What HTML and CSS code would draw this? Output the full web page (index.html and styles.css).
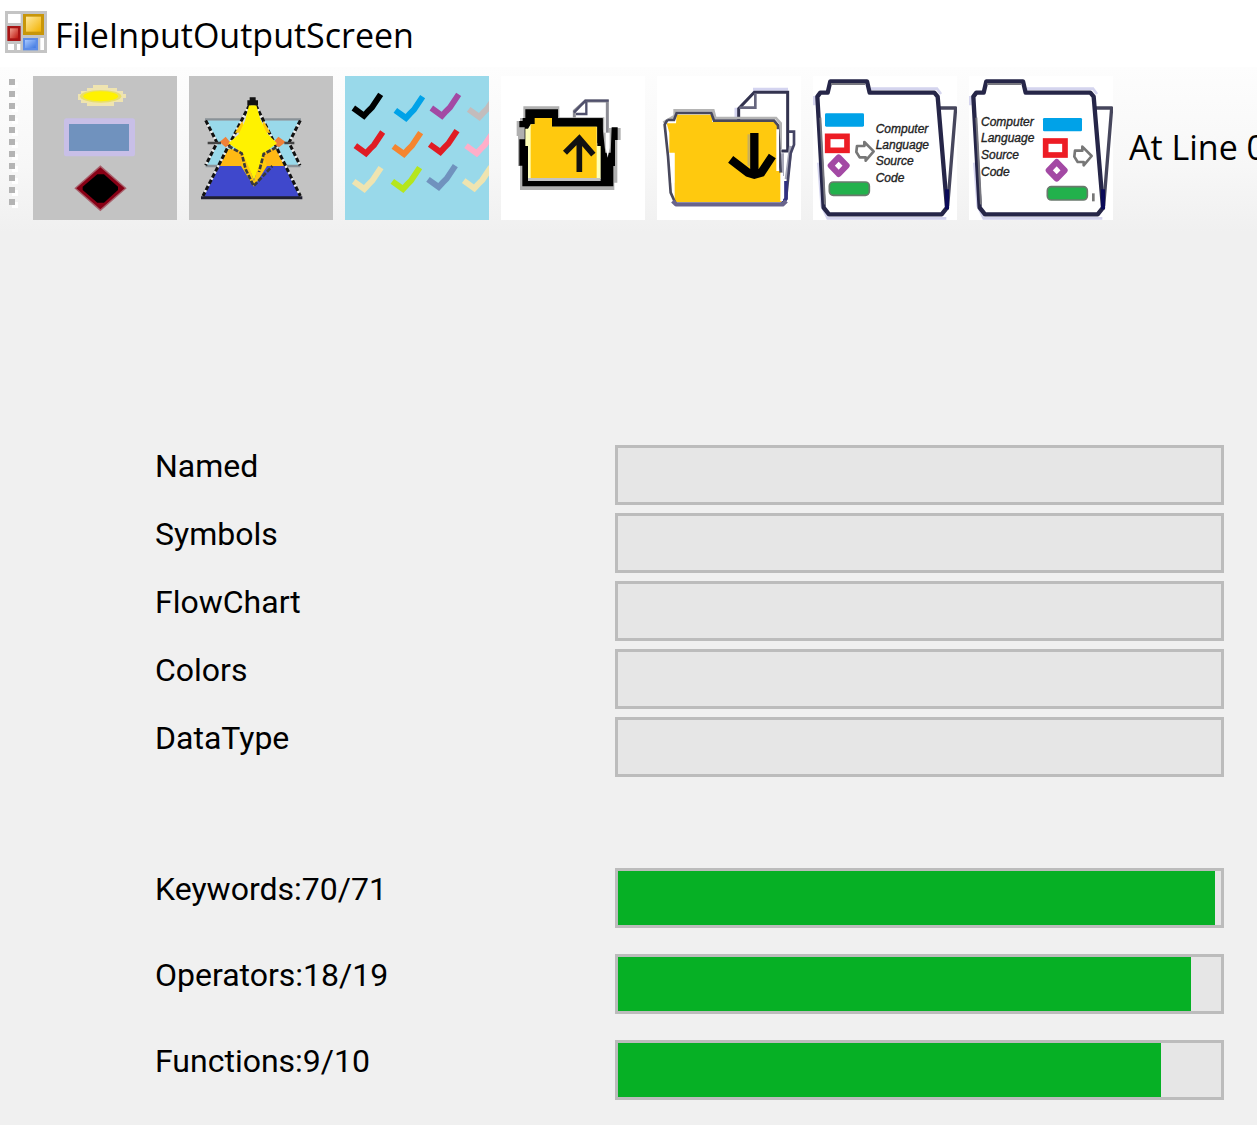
FILE: index.html
```html
<!DOCTYPE html>
<html lang="en">
<head>
<meta charset="utf-8">
<title>FileInputOutputScreen</title>
<link rel="stylesheet" href="styles.css">
</head>
<body>
<header class="titlebar">
  <svg class="app-icon" viewBox="15 33 126 126" aria-hidden="true">
    <defs>
      <linearGradient id="gold" x1="0" y1="0" x2="1" y2="1"><stop offset="0" stop-color="#ffe9a0"/><stop offset="1" stop-color="#f2b200"/></linearGradient>
      <linearGradient id="red" x1="0" y1="0" x2="1" y2="1"><stop offset="0" stop-color="#f0a090"/><stop offset="1" stop-color="#c01810"/></linearGradient>
      <linearGradient id="blue" x1="0" y1="0" x2="1" y2="1"><stop offset="0" stop-color="#a8c8ff"/><stop offset="1" stop-color="#3f78e0"/></linearGradient>
    </defs>
    <rect x="15" y="33" width="126" height="126" fill="#c4c4c4"/>
    <path fill="#fff" d="M24 42h38v27H24zM24 132h18v18H24zM51 132h10v18H51zM121 114h11v36h-11z"/>
    <rect x="69" y="42" width="63" height="63" fill="#c8960a"/>
    <rect x="78" y="50" width="45" height="45" fill="url(#gold)"/>
    <rect x="22" y="78" width="40" height="45" fill="#a81414"/>
    <rect x="30" y="85" width="24" height="30" fill="url(#red)"/>
    <rect x="69" y="114" width="45" height="37" fill="#5c8ce8"/>
    <rect x="75" y="120" width="32" height="24" fill="url(#blue)"/>
  </svg>
  <h1 class="title">FileInputOutputScreen</h1>
</header>

<div class="toolbar" role="toolbar" aria-label="File tools">
  <div class="grip" aria-hidden="true"></div>
  <button class="tool" type="button" aria-label="Flowchart shapes">
    <svg viewBox="99 30 432 432">
      <rect x="99" y="30" width="432" height="432" fill="#c3c3c3"/>
      <path fill="#efe4b0" d="M279 57h45v9h27v9h18v9h9v12h-9v12h-27v12h-81v-9h-18v-9h-9V84h9v-9h18v-9h18z"/>
      <ellipse cx="302" cy="91" rx="62" ry="19" fill="#e9df68"/>
      <ellipse cx="302" cy="91" rx="52" ry="15" fill="#fff200"/>
      <rect x="192" y="157" width="213" height="114" rx="8" fill="#c8bfe7"/>
      <rect x="207" y="174" width="180" height="81" fill="#7092be"/>
      <path fill="#a8606c" d="M301 298L380 367L301 436L223 367Z"/>
      <path fill="#880015" d="M301 304L374 367L301 430L229 367Z"/>
      <path fill="#000" d="M292 325H312L354 362V372L312 410H292L248 372V362Z"/>
    </svg>
  </button>
  <button class="tool" type="button" aria-label="Symbols">
    <svg viewBox="12 30 432 432">
      <rect x="12" y="30" width="432" height="432" fill="#c3c3c3"/>
      <path fill="#99d9ea" d="M62 163H346L312 230L345 298H62L96 230Z"/>
      <path stroke="#8a9298" stroke-width="7" d="M60 160H348M62 300H346"/>
      <path fill="#ffb914" d="M126 250H280L302 300H103Z"/>
      <path fill="#3f48cc" d="M103 300H302L346 394H54Z"/>
      <path fill="#d8d8d8" d="M203 100L262 215H144Z"/>
      <g fill="none" stroke="#eee" stroke-width="7"><path d="M62 163L96 230L62 298M346 163L312 230L345 298M203 98L54 390M203 98L346 390"/></g>
      <g fill="none" stroke="#111" stroke-width="9" stroke-dasharray="14 7"><path d="M62 163L96 230L62 298M346 163L312 230L345 298M203 98L54 390M203 98L346 390"/></g>
      <path fill="#f08038" d="M104 228L122 212L138 232L122 244ZM302 228L280 212L262 232L282 244Z"/>
      <path fill="#ffc90e" d="M174 258L190 292L207 345L222 292L232 258L246 300L207 362L168 300ZM150 200L172 165L180 200ZM256 200L236 165L226 200Z"/>
      <path fill="#fff200" d="M192 118H214L226 160L246 202L276 232L238 260L222 300L207 342L190 300L172 260L130 232L160 206L180 165Z"/>
      <g fill="none" stroke="#3a3a3a" stroke-width="8" stroke-dasharray="14 5"><path d="M130 240L170 262L182 310L206 360L262 300M274 244L236 264L222 318"/></g>
      <path stroke="#444" stroke-width="8" d="M68 231H108M298 231H328"/>
      <path fill="#111" d="M194 94h18v9h7v15h-32v-15h7z"/>
      <path stroke="#202030" stroke-width="9" d="M48 395H352"/>
    </svg>
  </button>
  <button class="tool" type="button" aria-label="Colors">
    <svg viewBox="15 30 432 432">
      <rect x="15" y="30" width="432" height="432" fill="#99d9ea"/>
      <defs><path id="tick" d="M0 44L32 67L44 54L56 42L82 3"/></defs>
      <g fill="none" stroke-width="18">
        <use href="#tick" x="40" y="82" stroke="#000"/>
        <use href="#tick" x="166" y="89" stroke="#00a2e8"/>
        <use href="#tick" x="274" y="82" stroke="#a349a4"/>
        <use href="#tick" x="386" y="86" stroke="#c3bcbc"/>
        <use href="#tick" x="46" y="195" stroke="#e01c24"/>
        <use href="#tick" x="160" y="197" stroke="#f5852f"/>
        <use href="#tick" x="269" y="191" stroke="#e01c24"/>
        <use href="#tick" x="378" y="195" stroke="#ffaec9"/>
        <use href="#tick" x="41" y="302" stroke="#efe4b0"/>
        <use href="#tick" x="157" y="302" stroke="#b5e61d"/>
        <use href="#tick" x="264" y="296" stroke="#7092be"/>
        <use href="#tick" x="371" y="300" stroke="#efe4b0"/>
      </g>
    </svg>
  </button>
  <button class="tool" type="button" aria-label="Upload file">
    <svg viewBox="15 30 432 432">
      <rect x="15" y="30" width="432" height="432" fill="#fff"/>
      <path fill="#fff" stroke="#8c8c94" stroke-width="9" d="M235 165V135L268 105H334V280"/>
      <path fill="none" stroke="#50506c" stroke-width="7" d="M234 140L268 104H338M240 144H271V108"/>
      <path fill="#b0b0b0" d="M62 165H72V156H82V121H190V154H325V200H338V186H374V222H364V350H355V372H72V300H66V210H62Z"/>
      <path fill="#000" d="M70 165H80V156H88V130H186V157H320V186L328 260H344L347 184H365V222H357V300H352V361H79V299H70V220H86V184H70Z"/>
      <path fill="#fff" d="M329 200H341V245L335 275L329 245Z"/>
      <path fill="#ffffb8" d="M88 188H96L104 175H304V230L314 240V338H96V240H88Z"/>
      <path fill="#c3c3c3" d="M96 336h218v9H96z"/>
      <path fill="#000" d="M186 157H320V240H304V182H168V166H186Z"/>
      <path fill="#ffc90e" d="M104 175h12v-19h52v26h134v154H104z"/>
      <g fill="none" stroke="#111" stroke-width="17"><path d="M250 214V318M207 260L250 217L292 266"/></g>
    </svg>
  </button>
  <button class="tool" type="button" aria-label="Download file">
    <svg viewBox="15 30 432 432">
      <rect x="15" y="30" width="432" height="432" fill="#fff"/>
      <path fill="none" stroke="#d4d4f0" stroke-width="9" d="M303 70H408M252 125V155"/>
      <path fill="#fff" stroke="#33334f" stroke-width="9" d="M260 162V128L307 79H407V255H388"/>
      <path fill="none" stroke="#66667e" stroke-width="8" d="M262 125H310V82"/>
      <path fill="none" stroke="#a8a8b8" stroke-width="12" d="M390 262V330M417 240L404 340"/>
      <path fill="none" stroke="#444464" stroke-width="8" d="M410 197H426V236L416 262L402 400"/>
      <path fill="none" stroke="#303080" stroke-width="11" d="M402 345V398L390 414"/>
      <path fill="#ffc90e" d="M74 146H180V168H370L380 190V315H388V408H68V260H52V200L44 172H72z"/>
      <path fill="none" stroke="#b4b4b4" stroke-width="8" d="M34 170L68 150V133H184L190 156H372L386 172V250"/>
      <path fill="none" stroke="#48485c" stroke-width="8" d="M46 162H66L74 141H178L186 164H366L378 178L386 320M46 162L38 176L48 270L56 380L70 411"/>
      <path fill="none" stroke="#fff" stroke-width="8" d="M63 262V350M377 190V315M389 320V405"/>
      <path fill="none" stroke="#68648c" stroke-width="13" stroke-linejoin="round" d="M62 405L72 415H392L403 405"/>
      <path stroke="#c9b05c" stroke-width="7" d="M290 205V300"/>
      <path fill="none" stroke="#000" stroke-width="25" d="M307 201V320M236 280L288 320L307 326L328 320L361 270"/>
    </svg>
  </button>
  <button class="tool" type="button" aria-label="Flowchart to source code">
    <svg viewBox="18 30 432 432">
      <defs>
        <g id="folder">
          <rect x="18" y="30" width="432" height="432" fill="#fff"/>
          <path fill="none" stroke="#d4d4ee" stroke-width="8" d="M192 68H390L402 84M22 90V118M34 290L44 420L62 457H418"/>
          <path fill="#fff" stroke="#46465c" stroke-width="10" stroke-linejoin="round" d="M398 126H446L422 420"/>
          <path fill="#fff" stroke="#262648" stroke-width="13" stroke-linejoin="round" d="M62 80H40L31 92L50 425L66 445H404L420 425L392 92L382 80H188L180 46H70Z"/>
          <path fill="none" stroke="#77777f" stroke-width="6" d="M40 155L54 415M72 54H174"/>
          <path stroke="#0a0a58" stroke-width="12" d="M420 370V430"/>
        </g>
        <g id="shapes">
          <rect x="54" y="142" width="117" height="40" rx="4" fill="#00a2e8"/>
          <rect x="62" y="211" width="58" height="42" fill="#fff" stroke="#ed1c24" stroke-width="17"/>
          <path fill="#fff" stroke="#a349a4" stroke-width="18" stroke-linejoin="round" d="M95 274L119 299L95 324L71 299Z"/>
          <rect x="67" y="348" width="120" height="40" rx="12" fill="#22b14c" stroke="#6a796d" stroke-width="5"/>
          <path fill="none" stroke="#777" stroke-width="8" stroke-linejoin="round" d="M150 240H172V228L200 256L176 284V274H158L148 258Z"/>
        </g>
      </defs>
      <use href="#folder"/>
      <use href="#shapes"/>
      <g class="caption"><text x="206" y="200">Computer</text><text x="206" y="248">Language</text><text x="206" y="298">Source</text><text x="206" y="348">Code</text></g>
    </svg>
  </button>
  <button class="tool" type="button" aria-label="Source code to flowchart">
    <svg viewBox="18 30 432 432">
      <use href="#folder"/>
      <use href="#shapes" x="186" y="14"/>
      <path stroke="#777" stroke-width="8" d="M391 382V406"/>
      <g class="caption"><text x="54" y="181">Computer</text><text x="54" y="229">Language</text><text x="54" y="279">Source</text><text x="54" y="329">Code</text></g>
    </svg>
  </button>
  <span class="status">At Line 0</span>
</div>

<main class="content">
  <section class="group">
    <label for="named">Named</label><progress id="named" max="100" value="0"></progress>
    <label for="symbols">Symbols</label><progress id="symbols" max="100" value="0"></progress>
    <label for="flowchart">FlowChart</label><progress id="flowchart" max="100" value="0"></progress>
    <label for="colors">Colors</label><progress id="colors" max="100" value="0"></progress>
    <label for="datatype">DataType</label><progress id="datatype" max="100" value="0"></progress>
  </section>
  <section class="group group-wide">
    <label for="keywords">Keywords:70/71</label><progress id="keywords" max="100" value="99"></progress>
    <label for="operators">Operators:18/19</label><progress id="operators" max="100" value="95"></progress>
    <label for="functions">Functions:9/10</label><progress id="functions" max="100" value="90"></progress>
  </section>
</main>
</body>
</html>
```
FILE: styles.css
```css
* {
  box-sizing: border-box;
}

body {
  margin: 0;
  background: #f0f0f0;
  color: #000;
  overflow-x: hidden;
}

.titlebar {
  display: flex;
  align-items: flex-start;
  gap: 8px;
  padding: 11px 5px 8px;
  background: #fff;
}

.app-icon {
  width: 42px;
  height: 42px;
}

.title {
  margin: 0;
  font: 400 34px/48px "Open Sans", "Noto Sans", sans-serif;
}

.toolbar {
  display: flex;
  align-items: center;
  gap: 12px;
  padding: 9px 0 12px 9px;
  overflow: hidden;
  background: linear-gradient(#fdfdfd, #f7f7f7 60%, #f0f0f0);
}

.grip {
  flex: none;
  align-self: flex-start;
  width: 12px;
  height: 129px;
  margin-top: 3px;
  background:
    conic-gradient(from 0deg at 6px 6px, transparent 75%, #b4b4b4 0) 0 0 / 12px 12px,
    conic-gradient(from 0deg at 6px 6px, transparent 75%, #fff 0) 3px 3px / 12px 12px;
}

.tool {
  flex: none;
  width: 144px;
  height: 144px;
  padding: 0;
  border: 0;
  background: none;
}

.tool svg {
  display: block;
  width: 100%;
  height: 100%;
}

.caption {
  fill: #222;
  stroke: #222;
  stroke-width: 1;
  font: italic 400 36px "Liberation Sans", sans-serif;
}

.status {
  flex: none;
  padding-left: 4px;
  padding-bottom: 2px;
  font: 400 34px/48px "Open Sans", "Noto Sans", sans-serif;
  white-space: nowrap;
}

.content {
  display: grid;
  gap: 91px;
  padding: 213px 33px 25px 155px;
}

.group {
  display: grid;
  grid-template-columns: 43% 1fr;
  row-gap: 8px;
}

.group-wide {
  row-gap: 26px;
}

.group label {
  padding-top: 1px;
  font: 400 32px/40px Roboto, "Liberation Sans", sans-serif;
}

progress {
  appearance: none;
  display: block;
  width: 100%;
  height: 60px;
  border: 3px solid #bcbcbc;
  background: #e6e6e6;
}

progress::-webkit-progress-bar {
  background: #e6e6e6;
}

progress::-webkit-progress-value {
  background: #06b025;
}
```
